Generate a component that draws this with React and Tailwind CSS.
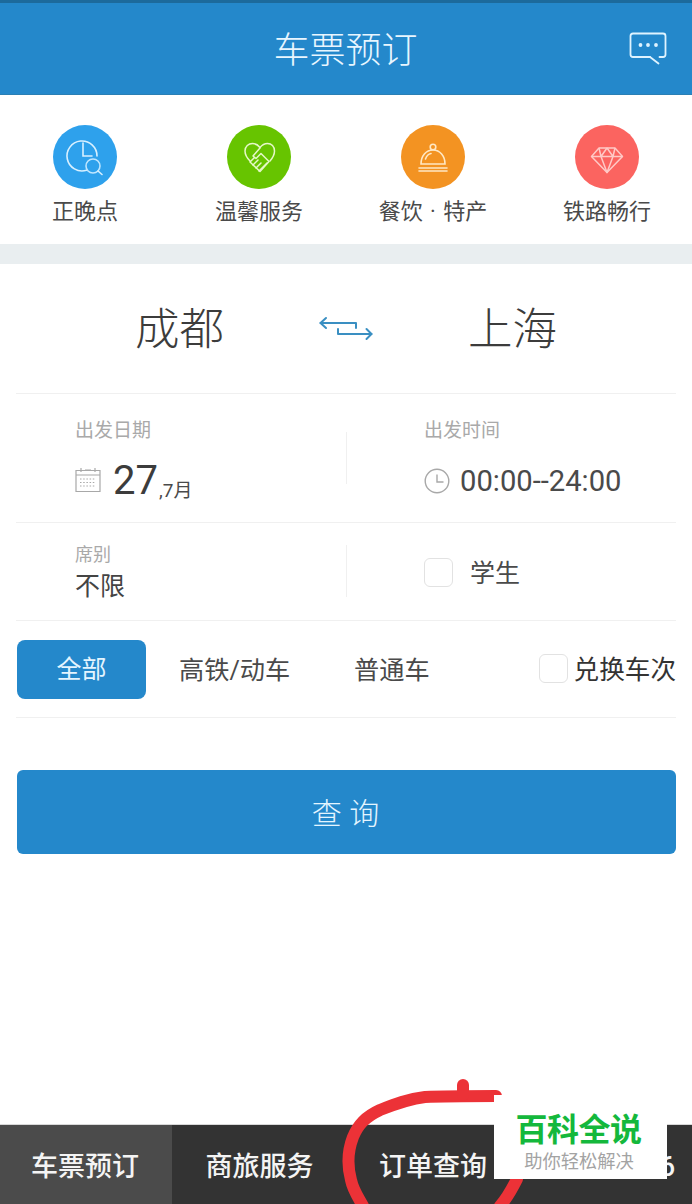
import React from "react";

const cjk = "font-['Roboto','Noto_Sans_CJK_SC',sans-serif]";

function ClockSearch() {
  return (
    <svg viewBox="0 0 64 64" className="w-16 h-16" fill="none" stroke="#d8f0ff" strokeWidth="1.6" strokeLinecap="round">
      <path d="M33.5 45.3 A15 15 0 1 1 44 31" />
      <path d="M30 18 V31 H39" />
      <circle cx="40" cy="41" r="7" stroke="#bfe6ff" />
      <path d="M45 46 L49 49.5" />
    </svg>
  );
}
function Handshake() {
  return (
    <svg viewBox="0 0 64 64" className="w-16 h-16" fill="none" stroke="#e6f8c8" strokeWidth="1.5" strokeLinecap="round" strokeLinejoin="round">
      <path d="M23 36 C19.5 32.5 18 30 18 26 C18 21.5 21.5 18.5 25.5 18.5 C28.5 18.5 31 20 33 22.5 C35 20 37.5 18.5 40.5 18.5 C44.5 18.5 47.5 21.5 47.5 26 C47.5 30 46 32.5 43 36" />
      <path d="M33 23 L26 31 L29 33.5 L34 28.5 L42 36.5 L33 46.5 L23 37 L27 33" />
      <path d="M26 40 L31 35 M29 43 L34 38 M32 46 L37 41 M35 43 L40 38" />
    </svg>
  );
}
function Cloche() {
  return (
    <svg viewBox="0 0 64 64" className="w-16 h-16" fill="none" stroke="#ffe8c4" strokeWidth="1.6" strokeLinecap="round">
      <circle cx="32" cy="22" r="2.8" />
      <path d="M20 39 C20 31 25 25 32 25 C39 25 44 31 44 39 Z" />
      <path d="M24.5 34 C25.5 31 27.5 29 30 28.5" />
      <path d="M18 43 H46 M18 46 H46" />
    </svg>
  );
}
function Diamond() {
  return (
    <svg viewBox="0 0 64 64" className="w-16 h-16" fill="none" stroke="#ffc9c6" strokeWidth="1.5" strokeLinejoin="round">
      <path d="M24 23 H40 L47.5 31.5 L32 47.5 L16.5 31.5 Z" />
      <path d="M16.5 31.5 H47.5 M24 23 L26 31.5 L32 47.5 L38 31.5 L40 23 M32 23 L26 31.5 M32 23 L38 31.5" />
    </svg>
  );
}
function Chat() {
  return (
    <svg width="38" height="34" viewBox="0 0 38 34" fill="none" stroke="#dff3ff" strokeWidth="1.8" strokeLinecap="round" strokeLinejoin="round">
      <path d="M21 25 H4 Q1.5 25 1.5 22.5 V4 Q1.5 1.5 4 1.5 H34 Q36.5 1.5 36.5 4 V22.5 Q36.5 25 34 25 H30.5" />
      <path d="M21 25 L29.5 31.5" />
      <circle cx="11.5" cy="13" r="1" fill="#dff3ff" />
      <circle cx="19" cy="13" r="1" fill="#dff3ff" />
      <circle cx="27" cy="13" r="1" fill="#dff3ff" />
    </svg>
  );
}
function Swap() {
  return (
    <svg width="54" height="30" viewBox="0 0 54 30" fill="none" stroke="#3a8fc2" strokeWidth="2" strokeLinecap="round" strokeLinejoin="round" className="shrink-0">
      <path d="M1.5 9 H37 V14" />
      <path d="M7 4 L1.5 9 L7 14" />
      <path d="M19 15 V20 H52.5" />
      <path d="M47.5 15 L52.5 20 L47.5 25" />
    </svg>
  );
}
function Calendar() {
  return (
    <svg width="26" height="26" viewBox="0 0 26 26" fill="none" stroke="#a8a8a8" strokeWidth="1.2" className="mb-[11px]">
      <path d="M1 3.5 H25 V24.5 H1 Z M1 8 H25" />
      <path d="M6 1 V5 M20 1 V5 M10 3 H16" />
      <path d="M5 12 H21 M5 15.5 H21 M5 19 H21" strokeDasharray="1.5 1.7" />
    </svg>
  );
}
function Clock() {
  return (
    <svg width="26" height="26" viewBox="0 0 26 26" fill="none" stroke="#a8a8a8" strokeWidth="1.4">
      <circle cx="13" cy="13" r="11.8" />
      <path d="M13 6.5 V14 H19.5" />
    </svg>
  );
}

function Feature({ color, label, icon }) {
  return (
    <div className="w-[174px] shrink-0 flex flex-col items-center">
      <div className={`w-16 h-16 rounded-full flex items-center justify-center ${color}`}>{icon}</div>
      <div className="mt-[10px] text-[22px] leading-[26px] text-[#4a4a4a] whitespace-nowrap [word-spacing:2px]">{label}</div>
    </div>
  );
}

function Box({ className = "" }) {
  return <div className={`w-[29px] h-[29px] rounded-md border border-[#e2e2e2] bg-white ${className}`} />;
}

export default function App() {
  return (
    <div className={`relative w-[692px] h-[1204px] overflow-hidden bg-white flex flex-col ${cjk}`}>
      <header className="h-[95px] shrink-0 bg-[#2488cb] border-t-[3px] border-t-[#1c6a9c] border-b border-b-[#2a7fb4] relative flex items-center justify-center">
        <div className="text-[36px] leading-none text-[#e8f6ff] font-light mt-[4px] -ml-[1px]">车票预订</div>
        <div className="absolute right-[25px] top-[29px]"><Chat /></div>
      </header>

      <section className="h-[149px] shrink-0 pt-[30px] flex -ml-[2px]">
        <Feature color="bg-[#2ea1ec]" label="正晚点" icon={<ClockSearch />} />
        <Feature color="bg-[#67c400]" label="温馨服务" icon={<Handshake />} />
        <Feature color="bg-[#f39322]" label="餐饮 · 特产" icon={<Cloche />} />
        <Feature color="bg-[#fb6460]" label="铁路畅行" icon={<Diamond />} />
      </section>

      <div className="h-5 shrink-0 bg-[#e9eef0]" />

      <main className="px-4 flex-1 flex flex-col">
        <div className="h-[130px] shrink-0 border-b border-[#f0f0f0] flex items-center text-[44.5px] text-[#3c3c3c] font-light">
          <div className="w-[303px] shrink-0 pl-[119px] leading-none mt-[3px]">成都</div>
          <Swap />
          <div className="flex-1 pl-[95px] leading-none mt-[3px]">上海</div>
        </div>

        <div className="h-[129px] shrink-0 border-b border-[#f0f0f0] flex items-center">
          <div className="w-[331px] h-[52px] shrink-0 border-r border-[#f0f0f0] relative">
            <div className="absolute left-[59px] -top-[13px] whitespace-nowrap">
              <div className="text-[19px] leading-[24px] text-[#a9a9a9]">出发日期</div>
              <div className="mt-[15px] flex items-end">
                <Calendar />
                <span className="ml-[12px] text-[40px] leading-[46px] text-[#3c3c3c]">27</span>
                <span className="ml-[1px] text-[19px] leading-[26px] text-[#4a4a4a]">,7月</span>
              </div>
            </div>
          </div>
          <div className="flex-1 h-[52px] relative">
            <div className="absolute left-[77px] -top-[13px] whitespace-nowrap">
              <div className="text-[19px] leading-[24px] text-[#a9a9a9]">出发时间</div>
              <div className="mt-[19px] flex items-center">
                <Clock />
                <span className="ml-[10px] text-[29.2px] leading-[38px] text-[#4a4a4a]">00:00--24:00</span>
              </div>
            </div>
          </div>
        </div>

        <div className="h-[98px] shrink-0 border-b border-[#f0f0f0] flex items-center">
          <div className="w-[331px] h-[52px] shrink-0 border-r border-[#f0f0f0] pl-[59px] -mt-[2px]">
            <div className="text-[18px] leading-[20px] text-[#a9a9a9]">席别</div>
            <div className="mt-[7px] text-[25px] leading-[30px] text-[#444444]">不限</div>
          </div>
          <div className="flex-1 pl-[77px] flex items-center mt-[4px]">
            <Box className="-mt-[2px]" />
            <span className="ml-[17px] text-[25px] leading-[30px] text-[#4a4a4a]">学生</span>
          </div>
        </div>

        <div className="h-[97px] shrink-0 border-b border-[#f0f0f0] flex items-center">
          <div className="ml-px w-[129px] h-[59px] rounded-lg bg-[#2488cb] text-[#e4f5ff] text-[25px] flex items-center justify-center pt-[2px]">全部</div>
          <div className="ml-[33px] w-[111px] mt-[3px] text-[25.2px] text-[#4a4a4a] whitespace-nowrap">高铁/动车</div>
          <div className="ml-[64px] mt-[3px] text-[25.2px] text-[#4a4a4a] whitespace-nowrap">普通车</div>
          <div className="ml-auto flex items-center">
            <Box />
            <span className="ml-[6px] mt-[3px] text-[25.6px] text-[#333333] whitespace-nowrap">兑换车次</span>
          </div>
        </div>

        <button className="mt-[52px] ml-px h-[84px] w-[659px] rounded-md bg-[#2488cb] text-[#e4f5ff] text-[30px] font-light flex items-center justify-center pt-[2px] pr-[2px]">
          查 询
        </button>
      </main>

      <nav className="h-20 shrink-0 bg-[#333333] border-t border-t-[#d8d8d8] flex text-[27px] font-medium text-[#f4f4f4]">
        <div className="w-[172px] bg-[#4b4b4b] flex items-center justify-center pt-[6px] pr-[2px]">车票预订</div>
        <div className="w-[175px] flex items-center justify-center pt-[6px]">商旅服务</div>
        <div className="w-[172px] flex items-center justify-center pt-[6px]">订单查询</div>
        <div className="flex-1 flex items-center justify-end pt-[6px] pr-[17px]">12306</div>
      </nav>

      <svg className="absolute left-[340px] top-[1075px]" width="200" height="129" viewBox="0 0 200 129" fill="none" stroke="#ec3237" strokeWidth="12" strokeLinecap="round" strokeLinejoin="round">
        <path d="M156 21 C130 21 105 21 85 22 C68 24 55 29 40 35 C25 42 18 50 13 62 C8 75 7 90 11 105 C13 115 18 122 23 131" />
        <path d="M123 10 L123 20" strokeWidth="12" />
        <path d="M177 104 C172 114 168 122 160 131" />
      </svg>

      <div className="absolute left-[494px] top-[1095px] w-[173px] h-[84px] bg-white flex flex-col items-center">
        <div className="mt-[17px] -ml-[4px] text-[32px] leading-[36px] font-bold text-[#14b83c] tracking-[-0.5px] whitespace-nowrap">百科全说</div>
        <div className="mt-[3px] -ml-[3px] text-[18.3px] leading-[22px] text-[#a3a3a3] whitespace-nowrap">助你轻松解决</div>
      </div>
    </div>
  );
}
